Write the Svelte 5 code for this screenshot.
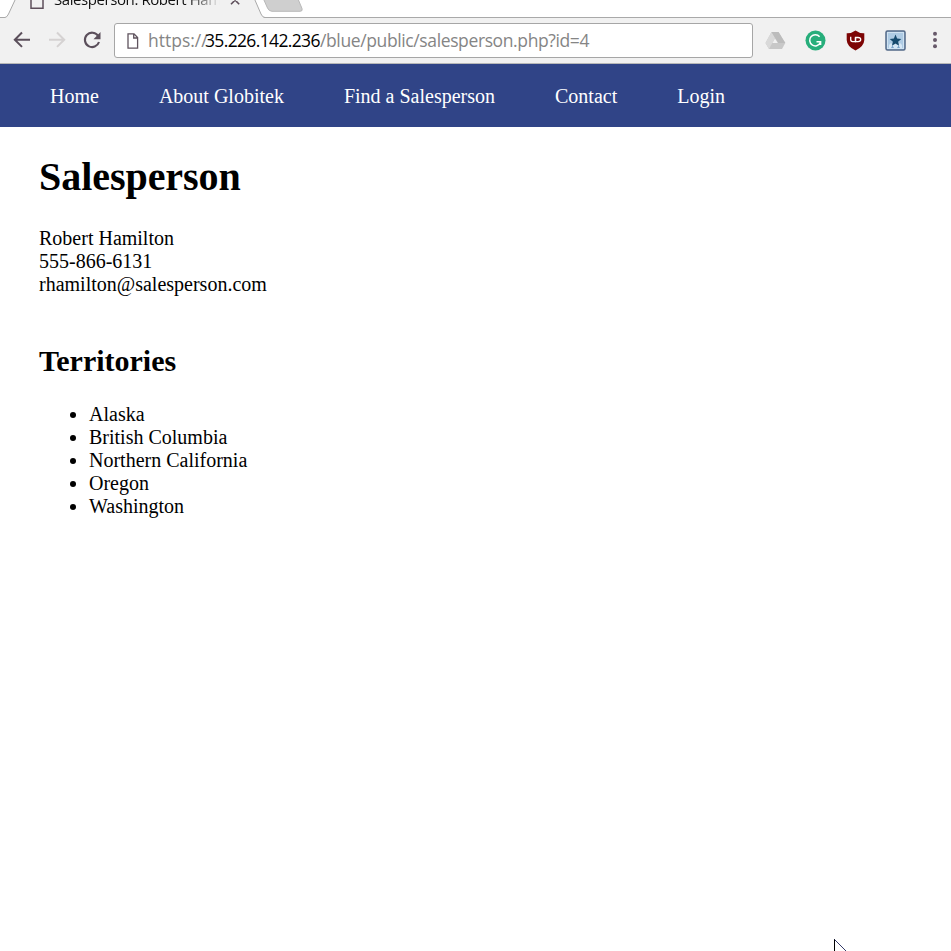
<script>
  const links = ['Home', 'About Globitek', 'Find a Salesperson', 'Contact', 'Login'];
  const territories = ['Alaska', 'British Columbia', 'Northern California', 'Oregon', 'Washington'];
</script>

<div class="window">
  <header class="tabs">
    <svg class="tabshape" width="310" height="18" viewBox="0 0 310 18">
      <path d="M15.500 -1L8.500 14Q7 17 5 17.500H0V18H265Q262.500 17.500 261 14L254.500 -1Z" fill="#f1f1f1" />
      <path d="M15.500 -1L8.500 14Q7 17.300 5 17.500H0M254.500 -1L261 14Q262.500 17.500 265 17.500H310" fill="none" stroke="#a9a9a9" />
      <path d="M263.500 -1L267.500 8Q269 11.300 272 11.300H300Q303 11.300 302 8.500L298 -1Z" fill="#cfcfcf" stroke="#b8b8b8" />
      <path d="M31 -3V8.200H43V-3" fill="none" stroke="#5e4f5b" stroke-width="1.500" />
      <path d="M231 -4L239.200 4.200M239.200 -4L231 4.200" stroke="#5e4f5b" stroke-width="1.600" />
    </svg>
    <span class="title">Salesperson: Robert Ham</span>
  </header>

  <div class="toolbar">
    <svg class="navicons" width="114" height="45" viewBox="0 18 114 45" fill="none">
      <path d="M30 39.700H15M22 32.500L14.800 39.700L22 46.900" stroke="#5b4f5b" stroke-width="2" />
      <path d="M49 39.700H64M57 32.500L64.200 39.700L57 46.900" stroke="#d5d2d2" stroke-width="2" />
      <path d="M98 35.700A7.200 7.200 0 1 0 99 42" stroke="#5b4f5b" stroke-width="2.100" />
      <path d="M100.500 32V39.300H93.500Z" fill="#5b4f5b" />
    </svg>
    <div class="address">
      <svg class="file" width="12" height="16" viewBox="0 0 12 16" fill="none" stroke="#5f535e" stroke-width="1.300">
        <path d="M1 .8H7L10.600 4.500V15.200H1ZM6.700 1V5H10.500" />
      </svg>
      <span class="scheme">https://</span><span class="host">35.226.142.236</span><span class="path">/blue/public/salesperson.php?id=4</span>
    </div>
    <svg class="extensions" width="198" height="45" viewBox="753 18 198 45">
      <path d="M771.500 32H778.500L785.300 43L782 49H769L765.500 43Z" fill="#c8c8c8" />
      <path d="M771.500 32L775 38L769 49L765.500 43Z" fill="#d9d9d9" />
      <path d="M771.500 32H778.500L785.300 43H778.300Z" fill="#bcbcbc" />
      <path d="M775 38.500L777.800 43H772.400Z" fill="#f1f1f1" />
      <circle cx="815.500" cy="40.500" r="10" fill="#27ae7b" />
      <path d="M819.600 36.700A5.600 5.600 0 1 0 820.300 42.800M816.500 41.800H820.600V45" fill="none" stroke="#fff" stroke-width="1.500" />
      <path d="M855.500 30.500Q859.500 33.500 864.300 33.300V40Q864 46.500 855.500 50.500Q847 46.500 846.700 40V33.300Q851.500 33.500 855.500 30.500Z" fill="#7d0505" />
      <path d="M850.700 36.800V39.600Q850.700 41.600 852.600 41.600H855.500V37.500" fill="none" stroke="#fff" stroke-width="1.300" />
      <path d="M855.500 37.500H858Q860.700 37.500 860.700 39.550T858 41.600H855.500Z" fill="none" stroke="#fff" stroke-width="1.300" />
      <rect x="886" y="31" width="19" height="19" rx="1.500" fill="#aecbe4" stroke="#536988" stroke-width="1.500" />
      <rect x="887.500" y="32.500" width="16" height="16" fill="none" stroke="#cfe2f1" />
      <path d="M889 48V45L891 43L893 45L895.500 44L898 45L900 43L902 45V48Z" fill="#d5e7f6" />
      <path d="M891 48L892.500 45.500L894 48ZM897 48L898.500 45.500L900 48Z" fill="#78a3cc" />
      <path d="M895.500 34.500L897.100 38.500L901.300 38.900L898.100 41.700L899.100 45.800L895.500 43.600L891.900 45.800L892.900 41.700L889.700 38.900L893.900 38.500Z" fill="#164a6e" />
      <g fill="#67596a"><circle cx="935" cy="33.800" r="2" /><circle cx="935" cy="40" r="2" /><circle cx="935" cy="46.200" r="2" /></g>
    </svg>
  </div>

  <nav>
    {#each links as link}<a href="#top">{link}</a>{/each}
  </nav>

  <main>
    <h1>Salesperson</h1>
    <div>Robert Hamilton<br />555-866-6131<br />rhamilton@salesperson.com</div>
    <h2>Territories</h2>
    <ul>
      {#each territories as territory}<li>{territory}</li>{/each}
    </ul>
  </main>

  <svg class="cursor" width="14" height="13" viewBox="0 0 14 13">
    <path d="M1.500 1V13H12.500Z" fill="#fff" />
    <path d="M1.500 1V13" stroke="#000" />
    <path d="M1.500 1.500L13 13" stroke="#343a68" />
  </svg>
</div>

<style>
  :global(body) { margin: 0; background: #fff; }
  .window {
    position: relative;
    height: 951px;
    overflow: hidden;
    color: #000;
    font: 20px/23px "Liberation Serif", "Times New Roman", serif;
  }
  .tabs {
    position: relative;
    height: 18px;
    box-sizing: border-box;
    border-bottom: 1px solid #a9a9a9;
  }
  .tabshape { position: absolute; left: 0; top: 0; }
  .title {
    position: absolute;
    left: 54px;
    top: -11px;
    width: 168px;
    white-space: nowrap;
    font: 15px/20px "Open Sans", sans-serif;
    letter-spacing: -0.420px;
    background: linear-gradient(90deg, #111 80%, transparent 99%);
    background-clip: text;
    color: transparent;
  }
  .toolbar {
    display: flex;
    height: 46px;
    box-sizing: border-box;
    background: #f1f1f1;
    border-bottom: 1px solid #b8b8b8;
  }
  .navicons, .extensions { flex: none; display: block; }
  .address {
    display: flex;
    align-items: center;
    box-sizing: border-box;
    width: 639px;
    height: 35px;
    margin-top: 5px;
    padding-left: 12px;
    border: 1px solid #a6a6a6;
    border-radius: 3px;
    background: #fff;
    color: #858585;
    font: 17.500px/33px "Open Sans", sans-serif;
    white-space: nowrap;
  }
  .file { flex: none; margin-right: 9px; }
  .scheme { width: 57px; }
  .host { width: 115px; color: #000; letter-spacing: -0.650px; }
  .path { letter-spacing: -0.380px; }
  nav {
    display: flex;
    gap: 60px;
    height: 63px;
    box-sizing: border-box;
    padding: 21px 50px 0;
    background: #304487;
  }
  nav a { color: #fff; text-decoration: none; }
  main { padding: 27px 39px 0; }
  h1 { margin: 0 0 27px; font-size: 40px; line-height: 46px; letter-spacing: -0.050px; }
  h2 { margin: 47px 0 25px; font-size: 30px; line-height: 35px; }
  ul { margin: 0; padding-left: 50px; }
  .cursor { position: absolute; left: 833px; top: 938px; }
</style>
